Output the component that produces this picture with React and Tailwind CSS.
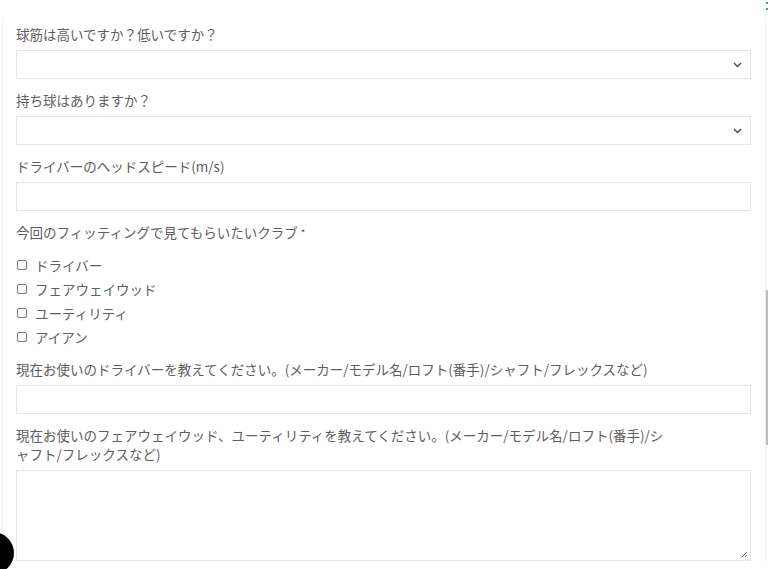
import React from 'react';

const Chevron = () => (
  <svg className="absolute right-[8px] top-1/2 -translate-y-1/2" width="9" height="6" viewBox="0 0 9 6" fill="none">
    <path d="M1 1l3.5 3.5L8 1" stroke="#444" strokeWidth="1.4" />
  </svg>
);

function Label({ children, required }) {
  return (
    <label className="block mb-[6px] text-[13.5px] leading-[19px] text-[#5e5e5e]">
      {children}
      {required && <span className="ml-[3px] text-[10px] align-top text-[#c02b2b]">*</span>}
    </label>
  );
}

function SelectField({ label }) {
  return (
    <div className="mb-[12px]">
      <Label>{label}</Label>
      <div className="relative h-[29px] border border-[#e6e6e6] bg-white">
        <Chevron />
      </div>
    </div>
  );
}

function TextField({ label }) {
  return (
    <div className="mb-[12px]">
      <Label>{label}</Label>
      <div className="h-[29px] border border-[#e6e6e6] bg-white" />
    </div>
  );
}

const clubs = ['ドライバー', 'フェアウェイウッド', 'ユーティリティ', 'アイアン'];

export default function App() {
  return (
    <div className="relative h-[569px] w-[768px] overflow-hidden bg-white" style={{ fontFamily: '"Noto Sans CJK JP", "Liberation Sans", sans-serif' }}>
      <div className="mt-[17px] ml-[2px] mr-[2px] border-l border-r border-[#f0f0f0] pt-[8px] pl-[13px] pr-[14px]">
        <SelectField label="球筋は高いですか？低いですか？" />
        <SelectField label="持ち球はありますか？" />
        <TextField label="ドライバーのヘッドスピード(m/s)" />

        <div className="mb-[11px]">
          <Label required>今回のフィッティングで見てもらいたいクラブ</Label>
          <div className="pt-[5px]">
            {clubs.map(c => (
              <div key={c} className="flex h-[24px] items-center text-[13.5px] text-[#5e5e5e]">
                <span className="ml-[1px] mr-[8px] h-[10px] w-[10px] rounded-[2px] border border-[#777]" />
                {c}
              </div>
            ))}
          </div>
        </div>

        <TextField label="現在お使いのドライバーを教えてください。(メーカー/モデル名/ロフト(番手)/シャフト/フレックスなど)" />

        <div>
          <Label>
            現在お使いのフェアウェイウッド、ユーティリティを教えてください。(メーカー/モデル名/ロフト(番手)/シ
            <br />
            ャフト/フレックスなど)
          </Label>
          <div className="relative h-[91px] border border-[#e6e6e6] bg-white">
            <svg className="absolute right-[2px] bottom-[2px]" width="7" height="7" viewBox="0 0 7 7">
              <path d="M6 1L1 6M6 4L4 6" stroke="#777" strokeWidth="1" />
            </svg>
          </div>
        </div>
      </div>

      <div className="absolute right-0 top-[290px] h-[155px] w-[2px] bg-[#bdbdbd]" />
      <div className="absolute right-0 top-[2px] h-[2px] w-[2px] bg-[#3aa88a]" />
      <div className="absolute right-0 top-[8px] h-[2px] w-[2px] bg-[#3aa88a]" />
      <div className="absolute left-[-28px] top-[532px] h-[42px] w-[42px] rounded-full bg-black" />
    </div>
  );
}
